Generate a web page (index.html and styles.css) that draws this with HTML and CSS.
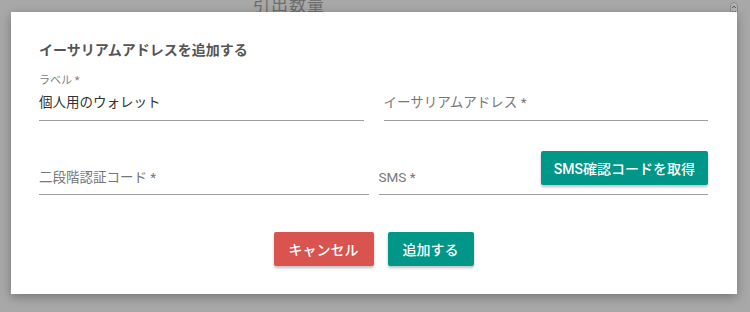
FILE: index.html
```html
<!DOCTYPE html>
<html lang="ja">
<head>
<meta charset="utf-8">
<link rel="stylesheet" href="styles.css">
</head>
<body>
<div class="page">
  <div class="bg-row">
    <span class="bg-label">引出数量</span>
    <svg class="spinner" width="8" height="14" viewBox="0 0 8 14"><rect x="0.5" y="0.5" width="7" height="13" rx="3.5" fill="#b4b4b4" stroke="#8c8c8c"/><path d="M2.3 6 L4 4 L5.7 6" fill="none" stroke="#555" stroke-width="1"/><path d="M2.3 9 L4 11 L5.7 9" fill="none" stroke="#555" stroke-width="1"/></svg>
  </div>
</div>
<div class="modal">
  <h2 class="title">イーサリアムアドレスを追加する</h2>
  <div class="row row1">
    <div class="field">
      <div class="label">ラベル *</div>
      <div class="value">個人用のウォレット</div>
    </div>
    <div class="field">
      <div class="value placeholder">イーサリアムアドレス *</div>
    </div>
  </div>
  <div class="row row2">
    <div class="field inline">
      <div class="value placeholder">二段階認証コード *</div>
    </div>
    <div class="field inline">
      <div class="value placeholder">SMS *</div>
      <button class="btn teal sms-btn">SMS確認コードを取得</button>
    </div>
  </div>
  <div class="actions">
    <button class="btn red">キャンセル</button>
    <button class="btn teal">追加する</button>
  </div>
</div>
</body>
</html>
```

FILE: styles.css
```css
* { box-sizing: border-box; }
html, body {
  margin: 0;
  padding: 0;
  width: 750px;
  height: 312px;
  overflow: hidden;
  background: #a8a8a8;
  font-family: Roboto, "Noto Sans CJK JP", sans-serif;
}
.page {
  width: 750px;
  height: 312px;
}
.bg-row {
  display: flex;
  justify-content: space-between;
  align-items: flex-start;
  padding: 0 12px 0 253px;
  margin-top: -5px;
}
.bg-label {
  font-size: 17px;
  line-height: 20px;
  color: #6e6e6e;
  letter-spacing: 1px;
}
.spinner {
  margin-top: 7px;
}
.modal {
  position: absolute;
  left: 11px;
  top: 12px;
  width: 726px;
  height: 282px;
  background: #fff;
  padding: 28px 29px 28px 28px;
  box-shadow: 0 3px 10px rgba(0,0,0,0.3);
  display: flex;
  flex-direction: column;
}
.title {
  margin: 0;
  font-size: 14px;
  line-height: 20px;
  font-weight: 700;
  color: #555;
}
.row {
  display: grid;
  grid-template-columns: 1fr 1fr;
}
.row1 {
  gap: 20px;
  margin-top: 14px;
}
.row2 {
  gap: 10px;
  margin-top: 30px;
}
.field {
  border-bottom: 1px solid #9e9e9e;
  padding-bottom: 7px;
  display: flex;
  flex-direction: column;
  justify-content: flex-end;
}
.label {
  font-size: 11px;
  line-height: 14px;
  color: #808080;
}
.value {
  margin-top: 3px;
  font-size: 13.5px;
  line-height: 22px;
  color: #333;
}
.placeholder {
  color: #777;
}
.field.inline {
  flex-direction: row;
  justify-content: space-between;
  align-items: flex-start;
  padding-bottom: 6px;
}
.field.inline .value {
  margin-top: 15px;
}
.btn {
  border: none;
  border-radius: 2px;
  color: #fff;
  font-family: Roboto, "Noto Sans CJK JP", sans-serif;
  font-size: 14px;
  font-weight: 500;
  height: 34px;
  padding: 0 15px;
  box-shadow: 0 2px 3px rgba(0,0,0,0.25);
}
.teal { background: #009688; }
.red { background: #d9534f; }
.sms-btn {
  font-size: 14px;
  padding: 0 13px;
}
.actions {
  display: flex;
  justify-content: center;
  gap: 14px;
  margin-top: 37px;
}
```
